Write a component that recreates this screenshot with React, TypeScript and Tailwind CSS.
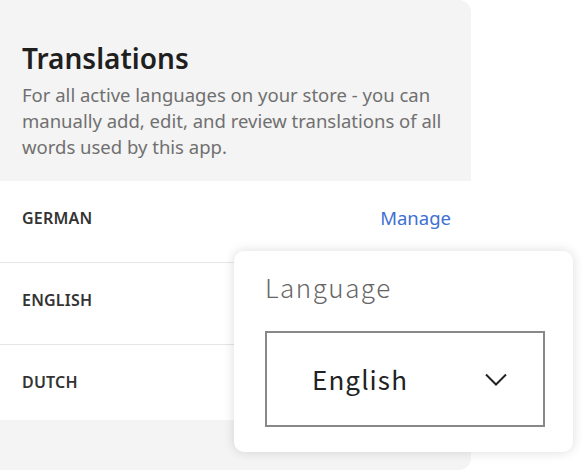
const languages = [
  { name: "German", h: "h-[82px]" },
  { name: "English", h: "h-[82px]" },
  { name: "Dutch", h: "h-[75px]" },
];

export default function App() {
  return (
    <div className="relative h-[472px] w-[582px] overflow-hidden bg-white font-['Noto_Sans',sans-serif]">
      <section className="flex h-[470px] w-[471px] flex-col rounded-r-xl bg-[#f4f4f4]">
        <header className="h-[181px] px-[22px] pt-[40px]">
          <h2 className="text-[28px] leading-[36px] font-semibold text-[#1f1f1f]">Translations</h2>
          <p className="mt-[6px] text-[18.5px] leading-[26px] text-[#707070]">
            For all active languages on your store - you can manually add, edit, and review translations of all
            words used by this app.
          </p>
        </header>
        <div className="bg-white">
          {languages.map((lang, i) => (
            <div
              key={lang.name}
              className={`flex ${lang.h} justify-between px-[20px] pt-[24px] ${i < languages.length - 1 ? "border-b border-[#e6e6e6]" : ""}`}
            >
              <span className="pl-[2px] text-[16px] leading-[26px] font-semibold tracking-[0.2px] uppercase text-[#333]">
                {lang.name}
              </span>
              {i === 0 ? <a className="text-[18.5px] leading-[26px] text-[#4070d2]">Manage</a> : null}
            </div>
          ))}
        </div>
      </section>

      <div className="absolute top-[251px] left-[234px] w-[339px] rounded-[10px] bg-white px-[31px] pt-[18px] pb-[25px] font-['Noto_Sans_CJK_JP',sans-serif] shadow-[0_0_12px_rgba(0,0,0,0.14)]">
        <p className="text-[26px] leading-[36px] tracking-[1.5px] font-light text-[#666]">Language</p>
        <div className="mt-[26px] flex h-[96px] w-[280px] items-center justify-between border-2 border-[#888] pr-[36px] pl-[45px]">
          <span className="pb-[2px] text-[26px] tracking-[1.1px] text-[#222]">English</span>
          <svg width="22" height="13" viewBox="0 0 22 13" fill="none" className="text-[#222]">
            <path d="M1 1.5 11 11.5 21 1.5" stroke="currentColor" strokeWidth="2" />
          </svg>
        </div>
      </div>
    </div>
  );
}
